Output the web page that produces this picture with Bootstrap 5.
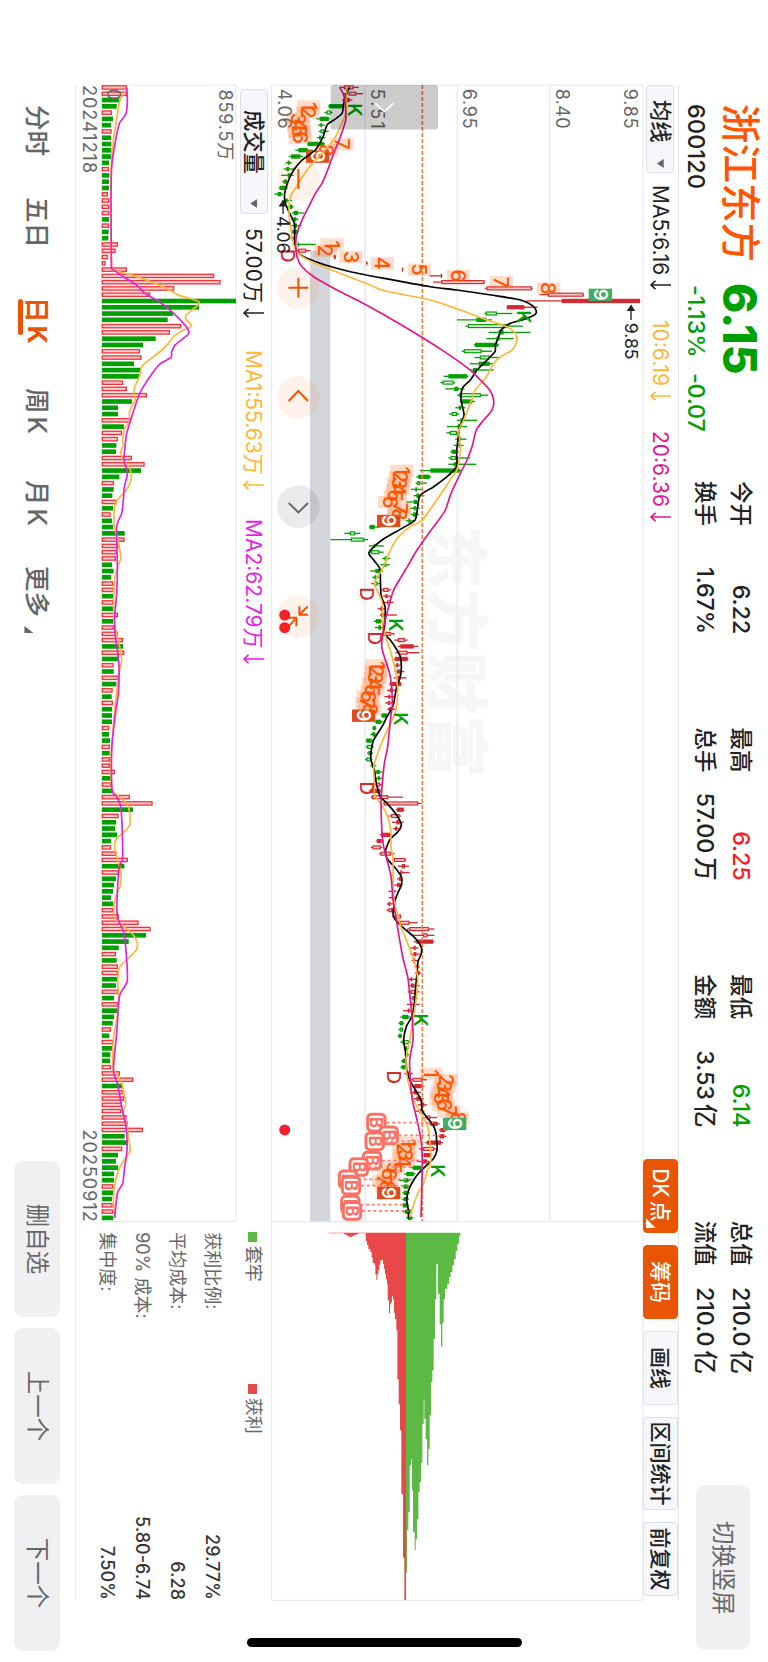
<!DOCTYPE html>
<html lang="zh-CN">
<head>
  <title>浙江东方 600120</title>
  <meta charset="utf-8">
  <meta name="viewport" content="width=device-width, initial-scale=1">
  <link href="https://cdn.jsdelivr.net/npm/bootstrap@5.3.1/dist/css/bootstrap.min.css" rel="stylesheet">
  <style>
body {
  background-color: #fff;
  color: #222;
  font-family: Inter, "Noto Sans CJK SC", sans-serif;
  line-height: 1;
  white-space: nowrap;
}

.phone {
  width: 768px;
  height: 1662px;
  overflow: hidden;
  contain: paint;
}

/* Landscape screen turned a quarter clockwise */
.screen {
  width: 1662px;
  height: 768px;
  transform: translateX(768px) rotate(90deg);
  transform-origin: 0 0;
}

.up { color: #f4212b; }
.down { color: #00a000; }
.inset { width: 1515px; margin-left: 85px; }
.unit { margin-left: 4px; }

/* Header */
.quote-head { height: 89.4px; margin-left: 104px; }
.quote-id { width: 377px; padding-top: 6px; }
.stock-name { font-size: 39.5px; font-weight: 500; color: #ff5500; width: 179px; line-height: 44px; }
.last-price { font-size: 46px; font-weight: 800; line-height: 44px; letter-spacing: 0; }
.quote-sub { font-size: 23.5px; font-weight: 500; line-height: 28px; padding-top: 8px; }
.stock-code { width: 181px; letter-spacing: .1px; }
.change-pct { width: 88px; letter-spacing: -.2px; }
.change-abs { letter-spacing: -.3px; }
.stat-col { width: 153px; margin-right: 93.6px; padding-top: 9px; font-size: 23.5px; font-weight: 500; }
.stat-col > div { height: 36px; }
.stat-col .stat-label { font-size: 22.5px; }
.stat-col .stat-value { letter-spacing: -.2px; }
.gray-btn { background-color: #f0f0f3; color: #666; border-radius: 9px; font-size: 23.5px; }
.rotate-btn { width: 165px; height: 54px; margin: 18px 0 0 18px; }

/* Indicator rows */
.tool-row { height: 35.8px; border-top: 1px solid #e2e4e8; font-size: 21px; }
.pick-btn {
  height: 28px;
  border: 1px solid #dcdfe6;
  border-radius: 4px;
  background-color: #f6f7fb;
  font-size: 21.3px;
  font-weight: 500;
}
.pick-ma { width: 88px; padding: 0 4px 0 14px; }
.pick-vol { width: 125px; margin-left: 4px; padding: 0 5px 0 20px; }
.caret { width: 9px; height: 7px; background-color: #666; clip-path: polygon(0 0, 100% 0, 50% 100%); }
.reading { display: flex; align-items: center; }
.reading svg { margin-left: 5px; }
.c-ma10 { color: #ffb636; }
.c-ma20 { color: #e6148c; }
.c-vol2 { color: #e61ee6; }
.tool-btn {
  width: 74px;
  height: 35px;
  border: 1px solid #dcdfe6;
  border-radius: 4px;
  background-color: #f6f7fb;
  font-size: 21px;
  font-weight: 500;
}
.tool-btn.on { background-color: #ea5504; border-color: #ea5504; color: #fff; position: relative; }
.tool-btn.wide { width: 93px; }
.corner { position: absolute; right: 4px; bottom: 2px; width: 10px; height: 10px; background-color: #fff; clip-path: polygon(100% 0, 100% 100%, 0 100%); }
.vol-row { height: 35.5px; font-size: 21px; }

/* Charts */
.chart-side { width: 1136.7px; }
.chip-side { width: 378.3px; }
.price-box, .chip-box { height: 371.3px; }
.vol-box { height: 134.3px; }
svg { display: block; overflow: visible; }
svg text { font-family: Inter, "Noto Sans CJK SC", sans-serif; }
.date-row { height: 26px; font-size: 18px; color: #666; letter-spacing: 1px; margin-right: -1px; }

/* Chip summary */
.chip-info { padding-left: 10.5px; color: #666; font-size: 18px; }
.legend-row { height: 38px; }
.legend-row > div { width: 152px; }
.swatch { width: 9.5px; height: 9.5px; margin-right: 4px; }
.swatch-trap { background-color: #5bb944; }
.swatch-gain { background-color: #ea4748; }
.chip-row { height: 35px; }
.chip-row b { font-weight: 500; color: #333; font-size: 18px; letter-spacing: 0; }

/* Bottom bar */
.bottom-bar { height: 75.6px; border-top: 1px solid #e8eaee; }
.period { font-size: 25.5px; font-weight: 500; color: #666; width: 92px; padding-left: 20px; }
.period .unit { margin-left: 3px; }
.period.on { color: #ea5504; font-weight: 700; position: relative; }
.period.on::after { content: ""; position: absolute; left: 30px; bottom: -7px; width: 36px; height: 5px; border-radius: 3px; background-color: #ea5504; }
.more-mark { width: 7px; height: 9px; margin: 17px 0 0 9px; background-color: #666; clip-path: polygon(100% 0, 100% 100%, 0 100%); }
.period-more { width: 160px; }
.nav-btn { width: 156px; height: 46px; }
.home-bar { position: absolute; left: 1638px; top: 246px; width: 9px; height: 275px; border-radius: 5px; background-color: #000; }
  </style>
</head>
<body>

<div class="phone">
<div class="screen">
  <header class="quote-head d-flex align-items-start">
    <div class="quote-id">
      <div class="d-flex">
        <div class="stock-name">浙江东方</div>
        <div class="last-price down">6.15</div>
      </div>
      <div class="d-flex quote-sub">
        <div class="stock-code">600120</div>
        <div class="change-pct down">-1.13%</div>
        <div class="change-abs down">-0.07</div>
      </div>
    </div>
    <div class="d-flex" id="stats"></div>
    <div class="gray-btn rotate-btn d-flex align-items-center justify-content-center">切换竖屏</div>
  </header>

  <div class="inset tool-row d-flex align-items-center">
    <div class="pick-btn pick-ma d-flex align-items-center justify-content-between">均线<span class="caret"></span></div>
    <div class="reading" style="width: 134px; padding-left: 12px" data-text="MA5:6.16"></div>
    <div class="reading c-ma10" style="width: 112px; padding-left: 13px" data-text="10:6.19"></div>
    <div class="reading c-ma20 flex-fill" style="padding-left: 12px" data-text="20:6.36"></div>
    <div class="d-flex me-1" style="gap: 12px">
      <div class="tool-btn on d-flex align-items-center justify-content-center">DK<span style="margin: 0 2px 0 3px">点</span><span class="corner"></span></div>
      <div class="tool-btn on d-flex align-items-center justify-content-center">筹码</div>
      <div class="tool-btn d-flex align-items-center justify-content-center">画线</div>
      <div class="tool-btn wide d-flex align-items-center justify-content-center">区间统计</div>
      <div class="tool-btn d-flex align-items-center justify-content-center">前复权</div>
    </div>
  </div>

  <div class="inset d-flex">
    <div class="chart-side">
      <div class="price-box"><svg id="price" width="1136.7" height="371.3" viewBox="255 0 3410 1114"></svg></div>
      <div class="vol-row d-flex align-items-center">
        <div class="pick-btn pick-vol d-flex align-items-center justify-content-between">成交量<span class="caret"></span></div>
        <div class="reading" style="width: 121px; padding-left: 14px" data-text="57.00万"></div>
        <div class="reading c-ma10" style="width: 169px; padding-left: 15px" data-text="MA1:55.63万"></div>
        <div class="reading c-vol2" style="padding-left: 15px" data-text="MA2:62.79万"></div>
      </div>
      <div class="vol-box"><svg id="volume" width="1136.7" height="134.3" viewBox="255 0 3410 403"></svg></div>
      <div class="date-row d-flex align-items-center justify-content-between"><span>20241218</span><span>20250912</span></div>
    </div>
    <div class="chip-side">
      <div class="chip-box"><svg id="chips" width="378.3" height="371.3" viewBox="3665 0 1135 1114"></svg></div>
      <div class="chip-info">
        <div class="legend-row d-flex align-items-center">
          <div class="d-flex align-items-center"><span class="swatch swatch-trap"></span>套牢</div>
          <div class="d-flex align-items-center"><span class="swatch swatch-gain"></span>获利</div>
        </div>
        <div class="chip-row d-flex align-items-center justify-content-between" style="margin-top: 4px">获利比例:<b>29.77%</b></div>
        <div class="chip-row d-flex align-items-center justify-content-between">平均成本:<b>6.28</b></div>
        <div class="chip-row d-flex align-items-center justify-content-between">90% 成本:<b>5.80-6.74</b></div>
        <div class="chip-row d-flex align-items-center justify-content-between">集中度:<b>7.50%</b></div>
      </div>
    </div>
  </div>

  <div class="inset bottom-bar d-flex align-items-center">
    <div class="period">分时</div>
    <div class="period">五日</div>
    <div class="period on" style="width: 99px; padding-left: 28px">日<span class="unit">K</span></div>
    <div class="period">周<span class="unit">K</span></div>
    <div class="period" style="width: 86px">月<span class="unit">K</span></div>
    <div class="period period-more d-flex">更多<span class="more-mark"></span></div>
    <div class="d-flex ms-auto" style="gap: 11px; margin-right: -51px">
      <div class="gray-btn nav-btn d-flex align-items-center justify-content-center">删自选</div>
      <div class="gray-btn nav-btn d-flex align-items-center justify-content-center">上一个</div>
      <div class="gray-btn nav-btn d-flex align-items-center justify-content-center">下一个</div>
    </div>
  </div>
  <div class="home-bar"></div>
</div>
</div>

<script src="https://cdn.jsdelivr.net/npm/bootstrap@5.3.1/dist/js/bootstrap.bundle.min.js"></script>
<script>
const GREEN = "#00a000", RED = "#d42a2f", ORANGE = "#ff5500";

// Header figures
const stats = [
  ["今开", "6.22", "", "换手", "1.67%"],
  ["最高", "6.25", "up", "总手", "57.00万"],
  ["最低", "6.14", "down", "金额", "3.53亿"],
  ["总值", "210.0亿", "", "流值", "210.0亿"]
];
const withUnit = v => v.replace(/[万亿]/, u => `<span class="unit">${u}</span>`);
document.getElementById("stats").innerHTML = stats.map(s => `
  <div class="stat-col">
    <div class="d-flex align-items-center justify-content-between"><span class="stat-label">${s[0]}</span><span class="stat-value ${s[2]}">${withUnit(s[1])}</span></div>
    <div class="d-flex align-items-center justify-content-between"><span class="stat-label">${s[3]}</span><span class="stat-value">${withUnit(s[4])}</span></div>
  </div>`).join("");

document.querySelectorAll(".reading").forEach(el => {
  el.innerHTML = `<span>${el.dataset.text}</span><svg width="10" height="21" viewBox="0 0 10 21" fill="none" stroke="currentColor" stroke-width="1.6"><path d="M5 0V20M.8 15.5L5 20L9.2 15.5"/></svg>`;
});

// Chart units are thirds of a pixel. x of day i:
const dayX = i => 262 + 18.845 * i;

// Volume: bar end level and direction, day by day (base level 306)
const volume = `381r 381r 358g 350g 336r 339g 333g 335r 333g 334g 334g 333g 327g 327r 328g 327g 327g 324r 328r 328r
328r 327g 327r 326g 325g 354r 347r 324r 317r 381r 643r 662r 523r 451r 708g 597g 519g 503g 544r 510r
467g 429g 420r 425r 402g 421g 417g 370r 381r 441r 396g 354g 354g 392r 372g 366r 354r 349g 348g 396r
434r 423g 358g 342r 341g 337g 350r 339g 332r 336g 339g 374g 374r 358r 350r 348r 336g 341g 333g 340r
342r 341g 341r 341g 354r 339g 342r 354r 369r 369g 373r 354g 341r 341g 354r 349g 338r 335g 339r 336g
336g 336g 328r 327g 330g 330r 329g 330r 330r 345r 334g 334r 336g 390r 458r 399g 356r 348g 345g 351g
333g 333r 350r 384r 373g 356r 348g 342g 339g 333g 340g 339r 357r 416r 452r 438g 386g 356g 348r 350g
354r 354r 354g 348g 356r 342g 354r 352g 342g 338g 333r 328g 340r 338g 331g 330g 333r 360r 400r 369g
368r 372r 366r 364r 380r 384r 429r 374g 383g 367r 354g 348g 354g 342g 342g 340r 339g 336g 338r 340r 340g`.split(/\s+/);

const volMa1 = "262,383 300,360 355,350 400,343 460,336 560,332 700,332 802,336 812,347 822,385 840,440 865,500 885,535 905,597 925,582 945,558 960,560 978,575 990,550 1010,520 1030,505 1055,480 1085,440 1100,425 1130,418 1167,402 1200,405 1235,388 1262,390 1285,374 1320,368 1335,370 1355,362 1375,368 1400,387 1425,394 1450,390 1475,375 1505,348 1540,342 1580,343 1620,353 1670,363 1695,355 1730,345 1800,341 1870,343 1920,355 1980,365 2020,357 2100,347 2200,338 2280,333 2360,335 2380,345 2400,370 2420,385 2450,390 2475,389 2490,378 2520,347 2545,344 2580,353 2620,363 2655,361 2690,347 2730,341 2755,345 2775,365 2800,395 2825,411 2850,409 2875,385 2900,360 2940,353 3000,356 3060,350 3120,340 3200,338 3215,345 3250,365 3310,377 3340,369 3370,380 3410,385 3450,391 3470,380 3500,360 3540,347 3600,340 3654,345";
const volMa2 = "262,380 300,382 340,378 370,358 430,345 500,335 600,333 790,334 806,337 830,370 855,410 880,435 900,470 930,510 975,555 998,567 1015,550 1035,525 1055,515 1072,513 1090,482 1115,460 1165,427 1190,415 1250,395 1300,380 1340,375 1380,372 1420,382 1460,373 1500,370 1540,365 1580,350 1700,352 1780,350 1850,344 1900,345 1950,352 2000,357 2080,355 2150,345 2250,335 2370,336 2390,350 2420,362 2500,367 2580,367 2600,358 2700,351 2755,353 2800,372 2880,380 2940,382 2960,374 2990,358 3100,350 3210,340 3250,352 3320,365 3380,378 3450,381 3500,374 3550,368 3580,352 3654,344";

// Candles: low, body bottom, body top, high, kind (r/g hollow, R/G solid)
const candles = `1018,1030,1060,1075,r 1028,1045,1068,1088,r 1025,1038,1048,1056,R 982,986,1028,1030,G 972,978,993,996,g
948,958,985,990,G 953,960,965,973,G 955,960,972,985,g 950,956,963,975,G 920,922,970,974,G
885,894,922,938,G 865,872,900,908,G 855,862,868,875,G 850,858,866,885,G 842,862,870,880,G
845,850,860,863,G 835,838,858,862,G 822,832,843,848,G 845,855,862,875,g 862,868,876,880,G
875,880,893,912,G 873,880,888,895,G 873,880,890,903,G 872,876,892,896,G 870,876,880,886,G
890,892,896,946,G 888,893,918,930,r 999,1001,1006,1007,R 1097,1098,1101,1102,R 1204,1205,1208,1209,R
1288,1321,1325,1326,R 1298,1322,1453,1454,r 1453,1458,1595,1597,r 1618,1642,1750,1751,r 1578,1684,1919,1920,R
1518,1520,1572,1612,R 1452,1456,1490,1536,g 1370,1428,1458,1475,G 1395,1402,1520,1568,g 1465,1495,1510,1590,G
1458,1488,1498,1540,g 1420,1424,1492,1496,G 1384,1390,1444,1475,g 1422,1438,1468,1495,g 1408,1435,1468,1482,G
1412,1418,1430,1480,G 1330,1344,1400,1404,G 1320,1326,1360,1364,g 1335,1362,1374,1392,G 1370,1376,1442,1464,g
1378,1384,1416,1424,G 1365,1375,1382,1395,G 1346,1354,1370,1376,g 1370,1380,1390,1430,g 1340,1372,1382,1400,G
1338,1348,1370,1380,g 1365,1375,1382,1398,G 1360,1375,1382,1390,G 1350,1354,1370,1375,G 1344,1350,1368,1410,g
1344,1360,1372,1428,G 1258,1290,1378,1382,G 1248,1254,1288,1292,G 1246,1250,1260,1280,g 1232,1245,1250,1264,G
1240,1248,1256,1272,G 1218,1240,1250,1255,G 1230,1240,1246,1258,G 1230,1238,1248,1255,G 1216,1224,1230,1245,G
1106,1108,1123,1140,G 1032,1048,1065,1080,g 990,1051,1092,1103,g 1105,1120,1125,1150,G 1108,1112,1138,1150,g
1146,1152,1162,1170,g 1140,1150,1158,1168,G 1110,1125,1138,1148,G 1116,1122,1128,1136,G 1112,1120,1132,1140,g
1140,1148,1165,1172,r 1148,1155,1162,1172,r 1152,1160,1168,1180,r 1132,1140,1146,1158,R 1138,1142,1150,1190,R
1120,1126,1142,1148,G 1124,1134,1142,1148,G 1140,1148,1172,1184,r 1182,1192,1214,1222,r 1192,1200,1240,1254,R
1185,1193,1222,1257,r 1180,1184,1222,1224,R 1182,1188,1194,1200,R 1182,1190,1200,1212,R 1180,1192,1200,1218,R
1166,1170,1202,1204,R 1160,1168,1178,1188,r 1152,1164,1170,1184,R 1154,1162,1170,1182,r 1160,1165,1175,1185,R
1142,1144,1160,1164,G 1122,1126,1142,1148,G 1115,1118,1126,1128,G 1110,1116,1124,1128,G 1096,1098,1114,1118,G
1096,1100,1116,1120,g 1100,1104,1114,1118,G 1094,1098,1112,1116,g 1110,1114,1122,1128,G 1118,1128,1138,1146,G
1122,1132,1138,1146,G 1118,1126,1140,1148,r 1105,1110,1140,1145,R 1112,1114,1164,1208,r 1148,1150,1254,1264,r
1186,1190,1210,1212,R 1164,1172,1198,1202,r 1175,1188,1198,1210,R 1178,1184,1190,1198,R 1138,1142,1170,1174,R
1126,1130,1144,1150,R 1112,1116,1142,1146,r 1136,1140,1172,1182,r 1176,1180,1216,1218,r 1192,1204,1214,1226,R
1198,1200,1206,1228,R 1190,1196,1204,1206,R 1182,1190,1200,1206,R 1164,1176,1182,1188,R 1165,1174,1180,1190,R
1160,1164,1170,1186,R 1158,1164,1176,1180,r 1176,1184,1202,1204,r 1192,1198,1228,1252,r 1220,1226,1286,1302,r
1234,1268,1282,1302,r 1240,1248,1298,1302,R 1230,1240,1246,1254,R 1230,1240,1248,1258,R 1234,1238,1244,1256,R
1242,1248,1254,1258,R 1244,1250,1258,1262,R 1224,1230,1236,1250,r 1225,1232,1242,1258,R 1222,1230,1246,1258,r
1228,1236,1246,1252,R 1220,1230,1236,1258,R 1208,1222,1228,1235,R 1200,1206,1224,1230,G 1194,1198,1208,1212,G
1194,1198,1208,1210,g 1192,1195,1204,1206,G 1200,1206,1226,1232,g 1210,1214,1220,1224,G 1212,1216,1222,1226,G
1202,1206,1216,1220,G 1200,1204,1216,1220,G 1212,1218,1228,1238,R 1230,1236,1266,1280,r 1238,1242,1264,1272,R
1232,1240,1250,1262,R 1240,1248,1262,1270,R 1252,1262,1272,1280,R 1246,1256,1264,1272,R 1272,1278,1290,1310,r
1286,1290,1312,1318,R 1316,1320,1334,1340,R 1314,1318,1332,1338,R 1274,1280,1322,1328,R 1256,1268,1302,1308,r
1266,1270,1290,1296,R 1250,1264,1280,1286,R 1230,1238,1262,1268,G 1212,1218,1240,1245,G 1195,1210,1224,1230,G
1206,1210,1224,1230,G 1206,1210,1222,1228,G 1204,1210,1222,1226,G 1206,1208,1222,1226,G 1206,1214,1234,1236,G
1218,1222,1234,1240,G`.split(/\s+/);

const ma5 = "262,1048 285,1036 310,1030 340,1025 360,1000 375,980 410,968 450,945 480,905 510,880 540,865 580,853 610,855 640,868 670,882 710,883 740,884 760,895 775,920 795,975 815,1050 835,1152 860,1290 870,1370 885,1472 900,1560 920,1600 940,1607 955,1580 970,1530 990,1502 1010,1495 1035,1485 1055,1484 1080,1460 1110,1430 1140,1410 1165,1386 1200,1382 1245,1391 1280,1378 1310,1374 1355,1369 1395,1370 1408,1362 1430,1340 1460,1300 1485,1260 1520,1252 1560,1244 1585,1205 1620,1145 1657,1106 1680,1120 1705,1138 1730,1140 1785,1142 1820,1154 1860,1154 1900,1152 1920,1170 1950,1190 1970,1200 2000,1203 2030,1200 2065,1188 2110,1180 2130,1172 2150,1160 2180,1145 2220,1120 2250,1113 2280,1112 2310,1122 2350,1128 2390,1140 2410,1160 2440,1185 2470,1202 2485,1200 2500,1188 2520,1168 2555,1155 2580,1163 2600,1182 2630,1203 2655,1203 2680,1192 2705,1183 2740,1178 2755,1182 2780,1205 2810,1240 2840,1262 2860,1263 2885,1253 2920,1250 2960,1246 3010,1242 3050,1234 3080,1218 3120,1210 3160,1216 3210,1219 3240,1228 3270,1245 3300,1262 3330,1265 3350,1278 3375,1298 3400,1307 3425,1309 3450,1310 3475,1300 3500,1275 3520,1255 3540,1240 3570,1225 3600,1219 3630,1224 3655,1224";
const ma10 = "262,1040 285,1038 340,1036 380,1020 420,1000 460,965 510,920 560,888 590,870 640,866 690,872 730,878 755,890 775,915 800,970 830,1045 855,1110 872,1152 900,1290 930,1380 960,1460 980,1520 1000,1545 1025,1549 1050,1535 1070,1500 1090,1480 1130,1458 1170,1425 1210,1410 1260,1390 1290,1376 1320,1378 1350,1380 1410,1370 1430,1355 1470,1330 1520,1295 1560,1266 1580,1230 1610,1195 1650,1170 1690,1154 1720,1138 1750,1122 1780,1135 1810,1146 1880,1148 1910,1156 1960,1172 2020,1187 2070,1192 2130,1187 2160,1175 2210,1152 2260,1132 2300,1120 2350,1122 2385,1123 2410,1140 2440,1158 2490,1171 2540,1172 2580,1178 2650,1178 2700,1181 2740,1190 2780,1202 2820,1218 2860,1233 2900,1246 2940,1252 3000,1247 3060,1238 3120,1228 3180,1217 3240,1222 3300,1240 3340,1262 3380,1282 3420,1288 3480,1292 3510,1282 3550,1270 3580,1252 3620,1238 3652,1228";
const ma20 = "262,1018 285,1030 320,1035 360,1036 410,1020 460,1000 510,982 550,965 580,945 610,930 660,905 700,890 730,886 770,890 800,905 830,940 870,1010 900,1070 945,1152 1010,1262 1060,1340 1110,1410 1140,1440 1170,1468 1200,1480 1230,1475 1260,1450 1290,1428 1340,1415 1380,1400 1420,1380 1480,1352 1530,1335 1560,1315 1600,1285 1650,1250 1710,1215 1770,1180 1820,1165 1870,1152 1895,1148 1940,1144 1980,1155 2030,1170 2110,1176 2160,1170 2240,1162 2290,1152 2360,1145 2410,1142 2500,1145 2540,1150 2580,1160 2630,1172 2700,1178 2760,1188 2820,1198 2880,1209 2930,1222 3000,1230 3060,1236 3120,1238 3180,1228 3240,1230 3300,1236 3360,1250 3420,1262 3480,1266 3580,1264 3652,1262";

// Nine-turn counts: first day, levels of 1..9, colour of the final 9
const counts = [
  [3, [925, 922, 893, 895, 897, 900, 1025, 978, 952], "#e24a18"],
  [25, [995, 975, 1052, 1146, 1257, 1374, 1503, 1645, 1800], "#3fae60"],
  [61, [1205, 1200, 1195, 1192, 1185, 1168, 1198, 1195, 1165], "#e24a18"],
  [92, [1130, 1128, 1125, 1120, 1115, 1103, 1100, 1108, 1090], "#e24a18"],
  [157, [1292, 1338, 1332, 1325, 1322, 1330, 1345, 1372, 1363], "#3fae60"],
  [168, [1222, 1210, 1215, 1208, 1180, 1165, 1150, 1160, 1165], "#e24a18"]
];

function curve(points, level, color) {
  const p = points.split(" ").map(s => s.split(",").map(Number)).map(([x, v]) => [x, level(v)]);
  let d = `M${p[0]}`;
  for (let i = 0; i < p.length - 1; i++) {
    const a = p[i - 1] || p[i], b = p[i], c = p[i + 1], e = p[i + 2] || c;
    d += `C${b[0] + (c[0] - a[0]) / 8},${b[1] + (c[1] - a[1]) / 8} ${c[0] - (e[0] - b[0]) / 8},${c[1] - (e[1] - b[1]) / 8} ${c}`;
  }
  return `<path d="${d}" fill="none" stroke="${color}" stroke-width="5"/>`;
}

// baseline shift that centres digits on the given level
function label(x, y, str, size, color, extra = "") {
  return `<text x="${x}" y="${y + size * .36}" font-size="${size}" fill="${color}" ${extra}>${str}</text>`;
}

function drawPrice() {
  const y = v => 1928 - v;
  let s = `<path d="M255 0H3665V1114H255Z" fill="none" stroke="#e4e6ea" stroke-width="3"/>`;
  s += label(1578, y(1370), "东方财富", 189, "#f6f6f7", `font-weight="900"`);
  [1371, 1648, 1094].forEach(v => s += `<path d="M255 ${y(v)}H3665" stroke="#eaecf2" stroke-width="5"/>`);
  s += `<rect x="752" y="${y(990)}" width="2912" height="61" fill="#d3d7dc"/>`;
  [[1889, "9.85"], [1685, "8.40"], [1408, "6.95"], [1130, "5.51"], [852, "4.06"]].forEach(t => s += label(266, y(t[0]), t[1], 54, "#666", `textLength="120"`));

  candles.forEach((row, i) => {
    const [lo, b, t, hi, kind] = row.split(",");
    const col = kind.toLowerCase() === "r" ? RED : GREEN, x = dayX(i);
    const hollow = kind === "r" || kind === "g";
    s += `<path d="M${x} ${y(lo)}V${y(hi)}" stroke="${col}" stroke-width="4"/>`;
    s += hollow
      ? `<rect x="${x - 4.5}" y="${y(t) + 2}" width="9" height="${Math.max(t - b - 4, 2)}" fill="${kind === "r" ? "#f3c9ca" : "#d3efd3"}" stroke="${col}" stroke-width="3.5"/>`
      : `<rect x="${x - 6.5}" y="${y(t)}" width="13" height="${t - b}" fill="${col}"/>`;
  });

  s += `<path d="M255 ${y(1266)}H3665" stroke="#f08040" stroke-width="5" stroke-dasharray="12 6"/>`;

  counts.forEach(([start, levels, last]) => {
    levels.slice(0, 8).forEach((v, k) => s += `<rect x="${dayX(start + k) - 18}" y="${y(v) - 35}" width="37" height="70" fill="#ff5500" opacity=".2"/>`);
    levels.forEach((v, k) => {
      const x = dayX(start + k);
      if (k === 8) s += `<rect x="${x - 18}" y="${y(v) - 35}" width="37" height="70" fill="${last}"/>`;
      s += label(x, y(v), k + 1, k === 8 ? 56 : 60, k === 8 ? "#fff" : ORANGE, `text-anchor="middle" font-weight="${k === 8 ? 600 : 500}"`);
    });
  });

  s += curve(ma5, y, "#000") + curve(ma10, y, "#ffb636") + curve(ma20, y, "#e6148c");

  [[330, 1064], [951, 1570], [1875, 1185], [2157, 1200], [3061, 1262], [3513, 1312]].forEach(k => s += label(k[0], y(k[1]), "K", 57, GREEN, `text-anchor="middle" font-weight="600"`));
  [[767, 862], [1782, 1098], [1915, 1123], [2365, 1100], [3232, 1180]].forEach(k => s += label(k[0], y(k[1]), "D", 56, RED, `text-anchor="middle" font-weight="500"`));

  // buy marks, each tied to its day by a dotted line
  [[3368, 1128, 1300], [3406, 1165, 1320], [3424, 1123, 1270], [3482, 1115, 1265], [3501, 1075, 1235], [3538, 1043, 1235], [3557, 1052, 1230], [3614, 1050, 1212], [3633, 1055, 1225]].forEach(m => {
    s += `<path d="M${m[0]} ${y(m[1] + 30)}V${y(m[2])}" stroke="#ff7d70" stroke-width="5" stroke-dasharray="9 8"/>`;
    s += `<rect x="${m[0] - 25}" y="${y(m[1]) - 26}" width="50" height="52" rx="11" fill="#fff" stroke="#fc7163" stroke-width="9"/>`;
    s += label(m[0], y(m[1]), "B", 50, "#fc7163", `text-anchor="middle" font-weight="700"`);
  });

  s += `<path d="M603 ${y(848)}H642M603 ${y(848)}l14 -10v20z" stroke="#222" stroke-width="4" fill="#222"/>` + label(648, y(848), "4.06", 53, "#222");
  s += `<path d="M917 ${y(1892)}H960M917 ${y(1892)}l14 -9v18z" stroke="#222" stroke-width="4" fill="#222"/>` + label(968, y(1892), "9.85", 53, "#222");

  // drag handle
  s += `<rect x="255" y="${y(1313)}" width="133" height="322" rx="8" fill="#000" opacity=".2"/><path d="M310 ${y(1179)}L335 ${y(1152)}L310 ${y(1125)}" fill="none" stroke="#fff" stroke-width="5"/>`;

  // round buttons
  const c = y(894);
  [537, 863, 1192, 1520, 1849].forEach((x, k) => s += `<circle cx="${x}" cy="${c}" r="64" fill="${k === 3 ? "#000" : "#ff5500"}" opacity=".08"/>`);
  s += `<g fill="none" stroke="#ea5504" stroke-width="6">
    <path d="M507 ${c}H567M833 ${c}H893M863 ${c - 30}V${c + 30}"/>
    <path d="M1203 ${c - 29}L1173 ${c}L1203 ${c + 29}"/>
    <path d="M1509 ${c - 29}L1537 ${c}L1509 ${c + 29}" stroke="#666"/>
    <path d="M1819 ${c - 28}L1844 ${c - 3}M1819 ${c - 3}H1844V${c - 29}"/>
    <path d="M1879 ${c + 29}L1853 ${c + 5}M1853 ${c + 30}V${c + 6}H1879"/>
  </g>`;
  [1845, 1883, 3390].forEach(x => s += `<circle cx="${x}" cy="${y(853)}" r="16.5" fill="#f4212b"/>`);
  document.getElementById("price").innerHTML = s;
}

function drawVolume() {
  const y = v => 708 - v;
  let s = `<path d="M255 0H3665V403H255Z" fill="none" stroke="#e4e6ea" stroke-width="3"/>`;
  volume.forEach((row, i) => {
    const v = parseInt(row), x = dayX(i);
    s += row.endsWith("g")
      ? `<rect x="${x - 7}" y="${y(v)}" width="14" height="${v - 306}" fill="${GREEN}"/>`
      : `<rect x="${x - 5}" y="${y(v) + 2}" width="10" height="${v - 309}" fill="#ffd0d0" stroke="#f4343a" stroke-width="4"/>`;
  });
  s += label(268, y(675), "859.5万", 54, "#666", `textLength="212"`) + label(266, y(340), "0", 54, "#666");
  s += curve(volMa1, y, "#ffb636") + curve(volMa2, y, "#e61ee6");
  document.getElementById("volume").innerHTML = s;
}

// Chip distribution: level, length pairs drawn as steps from the left edge
function drawChips() {
  const y = v => 1928 - v;
  const gain = "985,2 1010,2 1030,4 1036,8 1042,11 1048,14 1054,11 1060,8 1066,5 1075,2 1092,2 1096,25 1100,37 1104,50 1110,58 1114,75 1117,92 1123,98 1125,125 1128,142 1131,125 1134,112 1137,96 1140,83 1145,81 1148,95 1151,108 1154,125 1157,140 1160,155 1162,203 1166,242 1169,215 1172,208 1175,190 1178,200 1181,240 1184,260 1188,293 1191,440 1195,515 1199,593 1203,785 1208,975 1212,1102 1217,0";
  const trap = "1217,1020 1220,893 1224,838 1228,698 1232,680 1235,773 1238,898 1243,952 1246,920 1250,860 1254,778 1258,748 1262,690 1266,573 1270,500 1272,558 1276,620 1280,698 1284,648 1288,548 1292,448 1296,413 1300,318 1304,200 1308,95 1313,183 1318,275 1322,342 1326,270 1330,200 1334,168 1341,153 1346,133 1351,118 1356,98 1361,80 1366,55 1371,33 1376,10 1380,0";
  const steps = list => {
    const p = list.split(" ").map(t => t.split(",").map(Number));
    return `M3697 ${y(p[0][0])}` + p.map(([v, len]) => `V${y(v)}H${3697 + len}`).join("") + "Z";
  };
  document.getElementById("chips").innerHTML = `
    <path d="M3665 0H4800V1114H3665" fill="none" stroke="#e4e6ea" stroke-width="3"/>
    <path d="${steps(gain)}" fill="#ea4748"/><path d="${steps(trap)}" fill="#5bb944"/>`;
}

drawPrice();
drawVolume();
drawChips();
</script>

</body>
</html>
